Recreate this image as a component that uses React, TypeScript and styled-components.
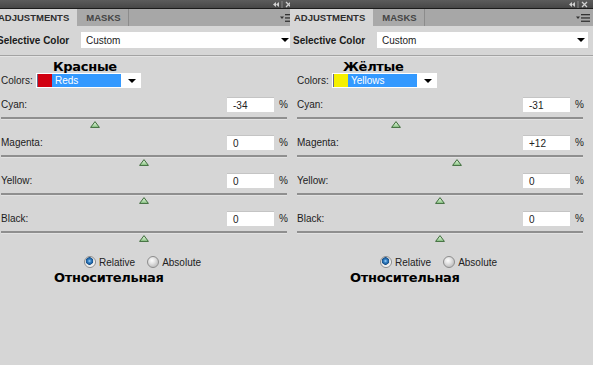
import React from "react";
import styled, { createGlobalStyle } from "styled-components";

const Global = createGlobalStyle`
  html, body { margin: 0; padding: 0; background: #d6d6d6; overflow: hidden; }
  #root { width: 593px; height: 365px; }
`;

const Screen = styled.div`
  display: flex;
  width: 593px;
  height: 365px;
  background: #d6d6d6;
  font-family: "Liberation Sans", Arial, sans-serif;
  font-size: 10px;
  color: #1c1c1c;
`;

const Panel = styled.div<{ $w: number }>`
  flex: none;
  width: ${p => p.$w}px;
  height: 100%;
  overflow: hidden;
`;

const Inner = styled.div<{ $shift: number }>`
  width: 303px;
  margin-left: ${p => p.$shift}px;
  display: flex;
  flex-direction: column;
`;

const TopBar = styled.div`
  height: 8px;
  background: linear-gradient(#5c5c5c, #474747);
  border-bottom: 1px solid #1c1c1c;
  display: flex;
  justify-content: flex-end;
  align-items: center;
  padding-right: 2px;
`;

const TabBar = styled.div`
  height: 17px;
  background: #a7a7a7;
  display: flex;
  align-items: stretch;
`;

const Tab = styled.div<{ $active?: boolean; $padL: number }>`
  display: flex;
  align-items: center;
  padding: 0 7px 0 ${p => p.$padL}px;
  font-size: 9.5px;
  font-weight: bold;
  color: ${p => (p.$active ? "#2e2e2e" : "#444")};
  background: ${p => (p.$active ? "#d6d6d6" : "#a9a9a9")};
  border-right: 1px solid ${p => (p.$active ? "#d6d6d6" : "#8c8c8c")};
`;

const MenuIcon = styled.div`
  margin-left: auto;
  display: flex;
  align-items: center;
  padding-right: 3px;
`;

const SelectRow = styled.div`
  margin-top: 6px;
  height: 16px;
  display: flex;
  align-items: center;
  padding: 0 5px 0 3px;
`;

const BoldLabel = styled.span`
  width: 84px;
  font-weight: bold;
  font-size: 10px;
  color: #1a1a1a;
`;

const Dropdown = styled.div`
  flex: 1;
  height: 16px;
  background: #fff;
  display: flex;
  align-items: center;
  padding: 0 3px 0 5px;
  box-sizing: border-box;
  font-size: 10px;
  color: #222;
`;

const Arrow = styled.span`
  margin-left: auto;
  width: 0;
  height: 0;
  border-left: 4px solid transparent;
  border-right: 4px solid transparent;
  border-top: 4px solid #000;
`;

const Divider = styled.div`
  margin-top: 7px;
  height: 1px;
  background: #a3a3a3;
  border-bottom: 1px solid #e4e4e4;
`;

const Note = styled.div<{ $x: number }>`
  margin-top: 3px;
  height: 13px;
  line-height: 13px;
  padding-left: ${p => p.$x}px;
  font-family: "DejaVu Sans", Verdana, sans-serif;
  font-weight: bold;
  font-size: 13px;
  letter-spacing: -0.3px;
  color: #000;
`;

const ColorsRow = styled.div`
  height: 15px;
  display: flex;
  align-items: center;
  padding-left: 7px;
`;

const ColorsLabel = styled.span`
  width: 35px;
`;

const ColorSelect = styled.div`
  width: 105px;
  height: 15px;
  box-sizing: border-box;
  border: 1px solid #fff;
  background: #fff;
  display: flex;
  align-items: stretch;
  padding-right: 4px;
`;

const Swatch = styled.span<{ $c: string }>`
  width: 14px;
  background: ${p => p.$c};
  border-left: 1px solid #6a6a8a;
`;

const Highlight = styled.span`
  width: 69px;
  background: #3399ff;
  color: #fff;
  padding-left: 3px;
  box-sizing: border-box;
  display: flex;
  align-items: center;
`;

const SelArrow = styled(Arrow)`
  align-self: center;
`;

const Sliders = styled.div`
  margin-top: 9px;
  display: flex;
  flex-direction: column;
`;

const SliderBlock = styled.div`
  height: 38px;
  display: flex;
  flex-direction: column;
`;

const ValueRow = styled.div`
  height: 15px;
  display: grid;
  grid-template-columns: 1fr 47px 8px;
  column-gap: 5px;
  align-items: center;
  padding: 0 10px 0 7px;
`;

const ValueBox = styled.div`
  height: 15px;
  background: #fff;
  border-top: 1px solid #c4c4c4;
  box-sizing: border-box;
  padding-left: 6px;
  display: flex;
  align-items: center;
  color: #222;
`;

const Track = styled.div`
  position: relative;
  margin: 5px 10px 0 7px;
  height: 2px;
  background: #8f8f8f;
  border-bottom: 1px solid #e2e2e2;
`;

const Thumb = styled.svg`
  position: absolute;
  top: 4px;
  transform: translateX(-50%);
`;

const RadioRow = styled.div`
  margin-top: 7px;
  height: 12px;
  display: flex;
  align-items: center;
  padding-left: 90px;
  color: #222;
`;

const Radio = styled.span<{ $on?: boolean }>`
  width: 10px;
  height: 10px;
  border-radius: 50%;
  border: 1px solid #8d8d8d;
  margin-right: 3px;
  background: ${p =>
    p.$on
      ? "radial-gradient(circle at 45% 40%, #a8d8ff 0, #3b86c8 1.5px, #14508c 3.5px, #dcdcdc 4px, #f4f4f4 5px)"
      : "radial-gradient(circle at 40% 35%, #fdfdfd 0, #e4e4e4 3px, #c6c6c6 6px)"};
`;

const RadioText = styled.span`
  margin-right: 12px;
`;

const Footer = styled(Note)`
  margin-top: 3px;
`;

type Slider = { name: string; value: number };

const TopIcons = () => (
  <svg width="22" height="7" viewBox="0 0 22 7">
    <polygon points="3,1 0,3.5 3,6" fill="#d0d0d0" />
    <polygon points="6,1 3,3.5 6,6" fill="#d0d0d0" />
    <rect x="8.5" y="0" width="1" height="7" fill="#8a8a8a" />
    <path d="M13 1 L18 6 M18 1 L13 6" stroke="#d0d0d0" strokeWidth="1.3" />
  </svg>
);

const Menu = () => (
  <svg width="14" height="8" viewBox="0 0 14 8">
    <polygon points="0,2.5 4,2.5 2,5" fill="#333" />
    <rect x="5" y="0" width="9" height="1.3" fill="#333" />
    <rect x="5" y="3.3" width="9" height="1.3" fill="#333" />
    <rect x="5" y="6.6" width="9" height="1.3" fill="#333" />
  </svg>
);

const ThumbShape = ({ left }: { left: string }) => (
  <Thumb width="10" height="7" viewBox="0 0 10 7" style={{ left }}>
    <defs>
      <linearGradient id="tg" x1="0" y1="0" x2="0" y2="1">
        <stop offset="0" stopColor="#eaf6e4" />
        <stop offset="1" stopColor="#8cc886" />
      </linearGradient>
    </defs>
    <polygon points="5,0.6 9.4,6.4 0.6,6.4" fill="url(#tg)" stroke="#3e6b3b" strokeWidth="1" />
  </Thumb>
);

const fmt = (v: number) => (v > 0 ? `+${v}` : `${v}`);

const AdjustPanel = ({
  width,
  shift,
  note,
  noteX,
  swatch,
  colorName,
  sliders,
}: {
  width: number;
  shift: number;
  note: string;
  noteX: number;
  swatch: string;
  colorName: string;
  sliders: Slider[];
}) => (
  <Panel $w={width}>
    <Inner $shift={shift}>
      <TopBar>
        <TopIcons />
      </TopBar>
      <TabBar>
        <Tab $active $padL={4}>ADJUSTMENTS</Tab>
        <Tab $padL={9}>MASKS</Tab>
        <MenuIcon>
          <Menu />
        </MenuIcon>
      </TabBar>
      <SelectRow>
        <BoldLabel>Selective Color</BoldLabel>
        <Dropdown>
          Custom
          <Arrow />
        </Dropdown>
      </SelectRow>
      <Divider />
      <Note $x={noteX}>{note}</Note>
      <ColorsRow>
        <ColorsLabel>Colors:</ColorsLabel>
        <ColorSelect>
          <Swatch $c={swatch} />
          <Highlight>{colorName}</Highlight>
          <SelArrow />
        </ColorSelect>
      </ColorsRow>
      <Sliders>
        {sliders.map(s => (
          <SliderBlock key={s.name}>
            <ValueRow>
              <span>{s.name}:</span>
              <ValueBox>{fmt(s.value)}</ValueBox>
              <span>%</span>
            </ValueRow>
            <Track>
              <ThumbShape left={`${50 + s.value / 2}%`} />
            </Track>
          </SliderBlock>
        ))}
      </Sliders>
      <RadioRow>
        <Radio $on />
        <RadioText>Relative</RadioText>
        <Radio />
        <RadioText>Absolute</RadioText>
      </RadioRow>
      <Footer $x={60}>Относительная</Footer>
    </Inner>
  </Panel>
);

export default function App() {
  return (
    <>
      <Global />
      <Screen>
        <AdjustPanel
          width={290}
          shift={-6}
          note="Красные"
          noteX={59}
          swatch="#d10010"
          colorName="Reds"
          sliders={[
            { name: "Cyan", value: -34 },
            { name: "Magenta", value: 0 },
            { name: "Yellow", value: 0 },
            { name: "Black", value: 0 },
          ]}
        />
        <AdjustPanel
          width={303}
          shift={0}
          note="Жёлтые"
          noteX={53}
          swatch="#f5f000"
          colorName="Yellows"
          sliders={[
            { name: "Cyan", value: -31 },
            { name: "Magenta", value: 12 },
            { name: "Yellow", value: 0 },
            { name: "Black", value: 0 },
          ]}
        />
      </Screen>
    </>
  );
}
